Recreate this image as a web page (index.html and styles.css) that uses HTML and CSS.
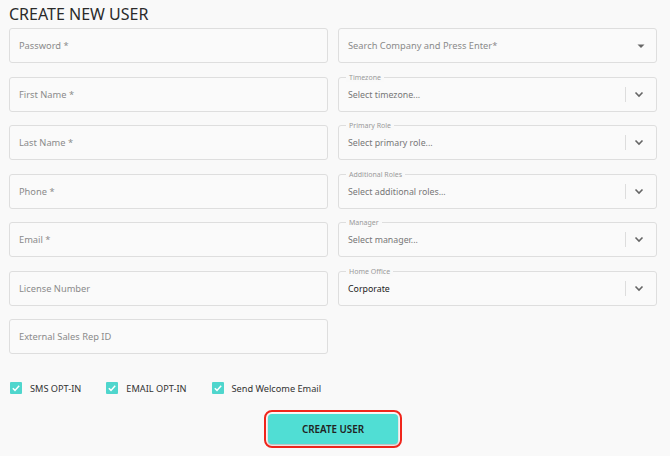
FILE: index.html
```html
<!DOCTYPE html>
<html>
<head>
<meta charset="utf-8">
<link rel="stylesheet" href="styles.css">
</head>
<body>
<div class="page">
  <h1 class="title">CREATE NEW USER</h1>
  <div class="grid">
    <div class="col">
      <div class="input"><span class="ph">Password *</span></div>
      <div class="input"><span class="ph">First Name *</span></div>
      <div class="input"><span class="ph">Last Name *</span></div>
      <div class="input"><span class="ph">Phone *</span></div>
      <div class="input"><span class="ph">Email *</span></div>
      <div class="input"><span class="ph">License Number</span></div>
      <div class="input"><span class="ph">External Sales Rep ID</span></div>
    </div>
    <div class="col">
      <div class="input search">
        <span class="ph">Search Company and Press Enter*</span>
        <svg class="caret" width="10" height="6" viewBox="0 0 10 6"><path d="M1.5 1.5h7L5 5z" fill="#666"/></svg>
      </div>
      <div class="select"><span class="legend">Timezone</span>
        <span class="val ph2">Select timezone...</span><span class="sep"></span>
        <svg class="chev" width="10" height="7" viewBox="0 0 10 7"><path d="M1.5 1.5L5 5l3.5-3.5" fill="none" stroke="#666" stroke-width="1.6"/></svg>
      </div>
      <div class="select"><span class="legend">Primary Role</span>
        <span class="val ph2">Select primary role...</span><span class="sep"></span>
        <svg class="chev" width="10" height="7" viewBox="0 0 10 7"><path d="M1.5 1.5L5 5l3.5-3.5" fill="none" stroke="#666" stroke-width="1.6"/></svg>
      </div>
      <div class="select"><span class="legend">Additional Roles</span>
        <span class="val ph2">Select additional roles...</span><span class="sep"></span>
        <svg class="chev" width="10" height="7" viewBox="0 0 10 7"><path d="M1.5 1.5L5 5l3.5-3.5" fill="none" stroke="#666" stroke-width="1.6"/></svg>
      </div>
      <div class="select"><span class="legend">Manager</span>
        <span class="val ph2">Select manager...</span><span class="sep"></span>
        <svg class="chev" width="10" height="7" viewBox="0 0 10 7"><path d="M1.5 1.5L5 5l3.5-3.5" fill="none" stroke="#666" stroke-width="1.6"/></svg>
      </div>
      <div class="select"><span class="legend">Home Office</span>
        <span class="val">Corporate</span><span class="sep"></span>
        <svg class="chev" width="10" height="7" viewBox="0 0 10 7"><path d="M1.5 1.5L5 5l3.5-3.5" fill="none" stroke="#666" stroke-width="1.6"/></svg>
      </div>
    </div>
  </div>
  <div class="checks">
    <label class="check"><span class="box"><svg width="12" height="12" viewBox="0 0 12 12"><path d="M2.8 6.2l2.2 2.2 4.2-4.6" fill="none" stroke="#fff" stroke-width="1.5"/></svg></span>SMS OPT-IN</label>
    <label class="check"><span class="box"><svg width="12" height="12" viewBox="0 0 12 12"><path d="M2.8 6.2l2.2 2.2 4.2-4.6" fill="none" stroke="#fff" stroke-width="1.5"/></svg></span>EMAIL OPT-IN</label>
    <label class="check"><span class="box"><svg width="12" height="12" viewBox="0 0 12 12"><path d="M2.8 6.2l2.2 2.2 4.2-4.6" fill="none" stroke="#fff" stroke-width="1.5"/></svg></span>Send Welcome Email</label>
  </div>
  <div class="actions">
    <div class="focus-ring"><button class="btn">CREATE USER</button></div>
  </div>
</div>
</body>
</html>
```

FILE: styles.css
```css
* { box-sizing: border-box; }
html, body { margin: 0; padding: 0; background: #f9f9f9; }
body { font-family: "Noto Sans", "Open Sans", sans-serif; color: #333; }
.page { padding: 0 13px 0 9px; width: 670px; }
.title { margin: 0; padding-top: 2px; height: 28px; font-size: 16px; font-weight: 400; line-height: 24px; color: #2b2b2b; }
.grid { display: grid; grid-template-columns: 319px 319px; column-gap: 10px; }
.col { display: flex; flex-direction: column; gap: 13.5px; }
.input { height: 35px; border: 1px solid #dedede; border-radius: 3px; display: flex; align-items: center; padding: 0 9px; background: #fafafa; }
.ph { font-size: 9.3px; color: #8a8a8a; }
.search { justify-content: space-between; padding-right: 10px; }
.caret { display: block; }
.select { height: 35px; padding: 0 12px 0 9px; border: 1px solid #dedede; border-radius: 3px; display: flex; align-items: center; background: #fafafa; position: relative; }
.legend { position: absolute; left: 7px; top: -5px; font-size: 7px; line-height: 9px; color: #9a9a9a; padding: 0 3px; background: #f9f9f9; }
.val { font-size: 8.8px; color: #222; flex: 1; padding-top: 1px; }
.ph2 { color: #777; }
.sep { width: 1px; height: 15px; background: #ddd; margin: 0 8px 0 0; }
.chev { display: block; }
.checks { display: flex; align-items: center; margin-top: 28px; padding-left: 1px; height: 12px; }
.check { display: flex; align-items: center; font-size: 9.2px; color: #333; margin-right: 25px; }
.box { width: 12px; height: 12px; background: #4fd6cd; border-radius: 1px; margin-right: 8px; display: flex; }
.actions { display: flex; justify-content: center; margin-top: 16px; }
.focus-ring { border: 2px solid #f0261c; border-radius: 8px; padding: 2px; }
.btn { display: block; width: 130px; height: 30px; border: none; border-radius: 4px; background: #50ded4; color: #222; font-family: "Noto Sans", sans-serif; font-size: 9.8px; font-weight: 600; box-shadow: 0 1px 2px rgba(0,0,0,0.3); padding: 0; }
```
